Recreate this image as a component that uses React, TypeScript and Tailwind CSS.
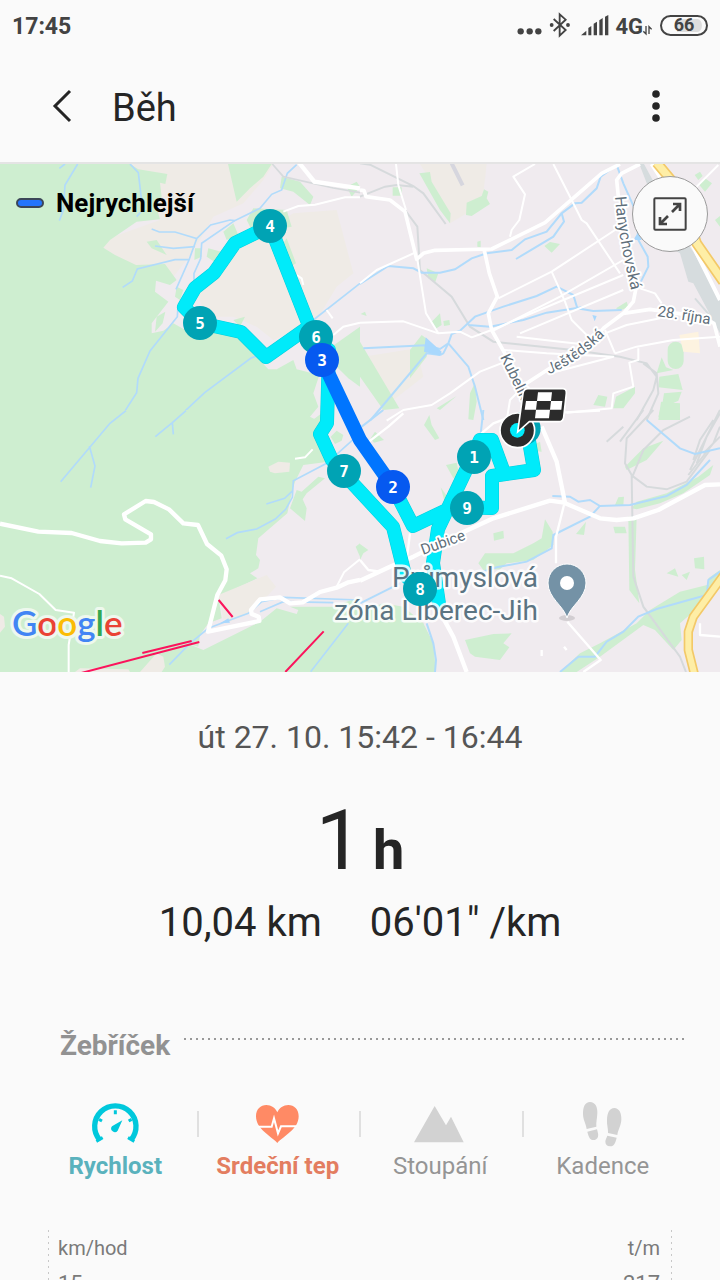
import type { ReactNode } from "react";

type Point = { n: number; x: number; y: number; fast?: boolean };

const points: Point[] = [
  { n: 1, x: 474, y: 457 },
  { n: 9, x: 467, y: 508 },
  { n: 8, x: 420, y: 589 },
  { n: 7, x: 344, y: 471 },
  { n: 6, x: 316, y: 337 },
  { n: 5, x: 200, y: 323 },
  { n: 4, x: 270, y: 226 },
  { n: 3, x: 322, y: 360, fast: true },
  { n: 2, x: 393, y: 487, fast: true },
];

const track =
  "M270 226 L235 243 L214 273 L195 288 L184 307 L200 323 L241 332 L266 357 L310 326 M270 226 L308 323 L322 360 M329 350 L327 423 L320 434 L332 460 L344 474 L393 527 L405 575 L420 590 M439 604 L433 563 L438 529 L467 468 L480 440 H492 L503 470 M393 487 L413 526 L453 507 L492 508 V476 L534 470 L528 435";

function StatusBar() {
  return (
    <div className="flex h-13 items-center justify-between px-3 text-[#434343]">
      <span className="pt-0.5 text-[23px] leading-7 font-bold">17:45</span>
      <div className="flex items-center">
        <svg width="26" height="24" viewBox="0 0 78 72" className="mr-1.5" fill="currentColor" aria-hidden="true">
          <circle cx="11" cy="52" r="9.5" />
          <circle cx="38" cy="52" r="9.5" />
          <circle cx="64" cy="52" r="9.5" />
        </svg>
        <svg width="22" height="26" viewBox="0 0 66 78" className="mr-2.5 mb-0.5" fill="none" stroke="currentColor" strokeWidth="5.5" aria-hidden="true">
          <path d="M14 21 L50 54 L32 71 V7 L50 23 L14 57" />
          <circle cx="8" cy="39" r="3" fill="currentColor" />
          <circle cx="57" cy="39" r="3" fill="currentColor" />
        </svg>
        <svg width="28" height="24" viewBox="0 0 84 72" className="mr-1.5" fill="currentColor" aria-hidden="true">
          <path d="M0 64 L16 50 V64Z" />
          <path d="M22 64 V42 L31 36 V64Z" />
          <path d="M38 64 V29 L48 23 V64Z" />
          <path d="M55 64 V19 L65 12 V64Z" />
          <path d="M72 64 V8 L82 3 V64Z" />
        </svg>
        <span className="pt-0.5 text-[22px] leading-7 font-bold">4G</span>
        <svg width="9" height="24" viewBox="0 0 27 72" className="mt-1 mr-2" fill="none" stroke="currentColor" strokeWidth="4" aria-hidden="true">
          <path d="M9 30 V54 L1 46 M18 54 V32 L26 40" />
        </svg>
        <span className="mb-0.5 flex h-[21px] w-12 items-center justify-center rounded-full border-2 border-current bg-linear-to-r from-[#fafafa] from-35% to-[#dedede] to-35% bg-clip-content px-1 py-0.5 text-[18px] leading-4 font-bold">
          66
        </span>
      </div>
    </div>
  );
}

function Header() {
  return (
    <header className="flex h-28 items-center border-b-2 border-[#e4e4e4] pr-11 pb-0.5 pl-[42px] text-[#252525]">
      <button type="button" aria-label="Zpět" className="flex h-12 w-10 items-center justify-center">
        <svg width="20" height="34" viewBox="0 0 20 34" fill="none" stroke="currentColor" strokeWidth="3">
          <path d="M18 2 L3 17 L18 32" />
        </svg>
      </button>
      <h1 className="ml-[30px] grow pt-1 text-[38px] leading-12">Běh</h1>
      <button type="button" aria-label="Další možnosti" className="flex h-12 w-10 items-center justify-center">
        <svg width="8" height="34" viewBox="0 0 8 34" fill="currentColor">
          <circle cx="4" cy="5" r="3.8" />
          <circle cx="4" cy="17" r="3.8" />
          <circle cx="4" cy="29" r="3.8" />
        </svg>
      </button>
    </header>
  );
}

// each group below is one map tile, drawn in its own 3x units
function BaseMap() {
  return (
    <>
      <rect x="0" y="160" width="720" height="520" fill="#f0ebef" />

      <g transform="translate(0 160) scale(0.33333)">
        <g fill="#efebe6">
          <path d="M390 12 L820 12 L790 60 L730 130 L640 170 L600 240 L560 300 L520 350 L400 320 L300 265 L340 230 L480 180Z" />
          <path d="M640 340 L720 250 L830 190 L880 160 L1010 150 L1060 340 L1010 380 L950 480 L820 540 L770 500 L700 470 L620 470 L590 400Z" />
        </g>
        <g fill="#ceeed0">
          <path d="M0 0 L390 12 L415 28 L502 42 L496 72 L480 68 L485 110 L468 138 L480 178 L410 185 L330 240 L310 263 L345 285 L408 315 L495 312 L530 360 L510 375 L468 362 L465 395 L505 425 L455 490 L455 520 L490 512 L520 490 L560 512 L640 515 L710 530 L760 580 L805 628 L830 628 L880 600 L890 628 L958 645 L940 700 L955 740 L930 770 L960 785 L0 785Z" />
          <path d="M684 12 H815 L790 50 L750 85 L710 125Z" />
          <path d="M845 50 L900 65 L940 110 L930 135 L880 95 L840 85Z" />
          <path d="M1040 80 L1070 65 L1080 80 L1055 110Z" />
          <path d="M440 245 L470 240 L500 285 L455 265Z M625 265 L680 280 L650 310 L620 290Z M670 215 L700 190 L715 225 L680 240Z M585 265 H605 V290 L583 300Z M740 180 L760 145 L860 150 L875 200 L760 220Z M850 250 L860 235 L888 310 L870 320Z" />
          <path d="M470 470 L496 455 L488 490 L465 515Z M530 380 L550 390 L540 420 L525 410Z M700 480 L735 470 L720 500Z" />
          <path d="M995 560 L1080 500 V680 L1045 655 L1010 620Z" />
        </g>
        <g fill="none" stroke="#b1dbfb" strokeWidth="5">
          <path d="M178 25 L195 12 M233 12 L195 75 L190 150 L178 182 M390 12 L415 38 L428 150 L410 170" />
          <path d="M455 207 L478 216 H525 L590 236 L632 195 L690 180 L704 182 L780 145 L815 103 L845 90 L862 40 L890 14" />
          <path d="M704 182 L605 250 L602 296 L582 340 V380 M590 236 L567 300 L528 388 M465 258 L520 265 L585 260 M368 382 L397 363 L412 327 L525 299 H567" />
          <path d="M534 440 L532 470 L450 573 L414 655 L410 698 L374 754 L340 782 M790 580 L752 595 L614 698 L524 782 M940 480 L1080 370" />
        </g>
        <path d="M817 12 L850 50 L1000 84 L1080 98" fill="none" stroke="#d6dadc" strokeWidth="5" />
        <g fill="none" stroke="#fff">
          <path d="M897 8 L943 65 L1080 85" strokeWidth="13" />
          <path d="M850 155 L895 138 L945 134 L1035 112 H1080 M1000 525 L1030 500 L1080 488 M980 450 L998 475 M890 345 L905 355 L910 375" strokeWidth="6" />
        </g>
      </g>

      <g transform="translate(360 160) scale(0.33333)">
        <path d="M180 12 H380 L370 100 L320 160 L270 190 L230 90Z" fill="#efebe6" />
        <path d="M10 590 L170 565 L190 650 L100 720 L50 640Z" fill="#efebe6" />
        <g fill="#ceeed0">
          <path d="M178 40 L210 36 L215 65 L272 160 L270 190 L240 150Z M98 82 H125 V107 H98Z M318 165 L320 128 L365 108 L372 88 L385 95 L380 115 L390 132 L335 168Z M352 245 L362 242 V262 L352 260Z M553 258 L570 246 L600 252 L575 278Z M200 325 L235 340 L225 368 L205 355Z M215 485 L240 460 L245 495 L225 508Z M250 483 L268 480 L270 495 L252 498Z" />
          <path d="M1004 45 L1020 35 L1028 48 L1015 60Z M1018 75 L1035 55 L1056 70 L1035 95Z M1065 180 L1080 168 V200Z M768 445 L800 425 L805 440 L780 452Z M0 545 L118 745 L70 750 L0 650Z M2 462 L15 455 L20 468Z M150 570 L185 525 L205 540 L200 590 L150 655Z M230 745 L290 708 L240 750Z M330 700 L345 668 L350 725 L340 780 L325 778Z" />
          <rect x="923" y="545" width="48" height="82" rx="24" />
          <path d="M890 640 L905 592 L918 622 L940 630Z M898 650 L955 642 L968 690 L895 682Z M912 700 L965 695 L955 722 L905 745Z M903 725 L960 730 V780 H895Z M760 745 L768 710 L825 680 L825 700 L790 745Z M700 735 L715 705 L742 710 L735 740Z" />
        </g>
        <path d="M958 525 L1015 515 L1020 580 L970 575Z" fill="#fdf3e0" />
        <g fill="none" stroke="#d6dadc" strokeWidth="6">
          <path d="M0 10 L30 14 L160 78 L190 100 L257 192 M0 110 L75 80 L110 75 L160 80 M135 150 L172 200 L180 330 L275 410 L330 500 L400 545 L640 570 L780 590 L860 610 L890 650 L880 690 L830 780 M850 610 L890 640 L895 700 L860 780" />
        </g>
        <path d="M838 12 L935 265 L960 280 L985 365 L1000 370 L1080 520 V420 L1000 275 L975 240 L852 12Z" fill="#d6dcde" />
        <path d="M1005 415 L1070 490" stroke="#d6dcde" strokeWidth="6" />
        <path d="M275 10 L308 76" stroke="#d6d6de" strokeWidth="12" />
        <g fill="none" stroke="#b1dbfb" strokeWidth="6">
          <path d="M0 372 L85 318 L160 325 L185 338 H240 L285 328 L335 295 L380 280 L455 270 L495 238 L560 215 L605 160 L645 130 L665 128 L710 85 L722 50 L770 15 L790 70 L830 160 L835 240 L863 290 L865 320 L840 370" />
          <path d="M605 160 L612 185 L580 230 L468 297 M10 565 L195 556 L240 567 L265 550 L275 522 L300 512 L345 470 L430 440 L530 408 L590 380 L640 405 L652 445 L700 453 L785 450 M325 495 L390 500 L490 480 L560 458 L665 442 M265 550 L325 620 L345 680 L370 780 M240 585 L200 580 L70 735 L30 782 M240 585 L250 580 L265 550" />
        </g>
        <path d="M197 532 L245 575 L240 587 L192 575Z M820 240 L835 215 L845 240Z M697 465 L710 468 L704 484Z" fill="#a9d8fd" />
        <g fill="none" stroke="#fff" strokeLinejoin="round">
          <path d="M0 90 L12 92 L18 110 L90 120 L135 155 L170 298 L190 280 L225 271 L395 267 L555 188 L725 40 L780 12" strokeWidth="11" />
          <path d="M372 267 L388 340 L412 410 L385 460 L395 510 L440 590 L490 700 M840 12 L785 40 L770 60 L775 110 M830 375 L820 425 L790 460 L870 448 L1020 470 L1062 490 L1080 560 M790 460 L730 505 L700 540 L500 670" strokeWidth="11" />
          <path d="M108 12 L115 75 L138 150 M0 370 L50 330 L165 278 M172 298 L198 460 L235 520 L130 484 L0 488 M235 520 L300 515 L335 532 L395 510 L790 345 M415 415 L575 335 L765 210 M480 520 L790 390" strokeWidth="6" />
          <path d="M400 512 L600 410 L790 300 M575 335 L615 425 L635 480 L700 545 M580 12 L635 120 L665 180 L680 190 L780 340 M525 12 L460 50 L495 103 L478 180 L455 210 L450 230 M840 385 L885 400 L905 430 M735 520 L800 495 L900 475" strokeWidth="6" />
          <path d="M430 570 L560 580 L760 590 L570 640 M765 580 L735 510 M765 580 L830 560 L940 540 L1080 530 M835 565 V600 L808 608 L820 680 L760 700 L755 745 L620 758 M470 530 L600 545 L690 555 M80 782 L130 750 L215 735 L270 700 L360 635 L450 600 M440 782 L450 720 L500 670 M1010 80 L1075 15" strokeWidth="6" />
          <path d="M875 12 L925 90 L1000 260 L1080 420" strokeWidth="12" />
        </g>
        <path d="M890 8 L950 80 L1010 250 L1090 365" fill="none" stroke="#f3c968" strokeWidth="32" />
        <path d="M890 8 L950 80 L1010 250 L1090 365" fill="none" stroke="#feeea6" strokeWidth="22" />
      </g>

      <g transform="translate(0 410) scale(0.33333)">
        <path d="M0 0 L940 0 L925 15 L935 32 L965 10 V45 L940 75 L965 130 L985 155 L910 165 L885 215 L875 250 L862 310 L775 385 L768 435 L780 450 L775 475 L750 490 L772 505 L655 560 L665 625 L625 640 L600 675 L595 710 L560 700 L610 720 L780 635 L830 595 L890 612 L895 600 L870 590 L1000 590 L1080 560 V790 H0Z" fill="#ceeed0" />
        <path d="M655 555 L800 495 L828 530 L800 560 L770 570 L745 610 L690 635 L670 625Z M805 170 L835 155 L870 158 L868 185 L825 190 L810 185Z M420 786 L470 730 L490 740 L495 770 L485 786Z M0 612 L12 620 L15 650 L0 668Z M225 786 L240 775 L385 778 L390 786Z" fill="#efebe6" />
        <path d="M870 295 L890 240 L905 245 L955 200 L975 205 L920 250 L908 268 L920 295 L915 333Z M992 80 L1010 62 L1030 75 L1025 92 L1005 102Z M1067 410 L1080 400 V440Z" fill="#ceeed0" />
        <g fill="none" stroke="#b1dbfb" strokeWidth="5">
          <path d="M378 2 L330 40 L182 215 M268 108 L285 168 L272 233 M558 2 L517 38 L466 80 M517 38 L520 73" />
          <path d="M1080 70 L980 160 L880 212 L877 262 L857 298 L826 327 L770 357 L712 368 L678 386 M877 243 L854 265 L799 282" />
          <path d="M508 764 L570 700 L625 655 L690 630 L745 610 L785 575 L850 562 L1080 570 M780 605 L850 575 L1000 578 M1045 640 L932 785" />
        </g>
        <path d="M660 640 L685 625 L690 638Z" fill="#a9d8fd" />
        <g fill="none" stroke="#fff" strokeLinejoin="round">
          <path d="M0 341 L115 365 L215 369 L300 393 L365 400 L437 398 L453 388 V373 L376 328 L372 313 L437 273 L462 276 L507 298 L550 340 L594 345 L621 402 L664 437 L680 478 L676 511 L652 555 L624 665 L778 633 L776 620 L755 612 L753 600 L780 568 L840 562 L870 580 L908 577 L960 546 L1010 533 L1045 517 L1080 510" strokeWidth="13" />
          <path d="M0 497 L35 505 L118 552 L167 600 L222 608 L206 705 V786 M1010 530 L1032 487 L1080 448 M885 146 L915 142 L938 118" strokeWidth="6" />
        </g>
        <path d="M656 570 L698 621 M427 729 L575 693 M240 790 L598 696 M856 786 L971 664" stroke="#fb145c" strokeWidth="6" fill="none" />
      </g>

      <g transform="translate(360 410) scale(0.33333)">
        <g fill="#ceeed0">
          <path d="M0 605 L70 580 L130 590 L190 640 L220 700 L228 790 H0Z" />
          <path d="M315 690 L400 672 L455 670 L430 700 L448 712 L420 750 L345 740 L330 730Z M355 460 L375 430 L460 430 L520 400 L545 385 L555 328 L578 365 L580 405 L520 450 L440 460 L420 478 L370 480Z M400 370 L430 362 L432 385 L402 392Z M648 372 L678 335 L672 375Z" />
          <path d="M600 786 L660 730 L720 700 L830 640 L870 600 L960 545 L1080 515 L1070 545 L960 640 L965 690 L940 720 L885 660 L850 645 L720 740 L650 786Z" />
          <path d="M805 320 H830 L825 480 L838 580 L808 540Z M760 350 L795 350 L800 370 L765 370Z M920 490 L945 475 L955 500Z M965 495 L990 485 L980 510Z M1002 445 L1032 440 L1033 478 L1005 475Z" />
          <path d="M765 285 L775 262 L792 260 L790 285Z M815 295 L830 275 L920 250 L1015 200 L1060 165 L1050 195 L970 250 L900 280 L830 298Z M795 170 L850 115 L910 92 L860 150 L800 180Z M900 0 H955 L960 30 L895 20Z M192 45 L208 15 L215 45 L238 85 L225 90Z M258 165 L290 158 L298 195 L280 205Z M32 85 L45 65 L72 90 L42 98Z M242 232 L262 260 L255 280Z M0 402 L25 420 L10 430 L0 450Z M1045 505 L1080 480 V520 L1050 550Z M490 120 L540 95 L545 125Z" />
        </g>
        <g fill="none" stroke="#d6dadc" strokeWidth="6">
          <path d="M880 0 L800 85 L795 160 L815 195 L820 500 L850 590 L960 740 L978 786 M820 200 L860 230 L920 238 L980 215 L1050 120 M815 205 L850 120 L910 60 L990 20" />
          <path d="M780 95 L850 0 M990 180 L1080 0 M985 195 L1060 100 L1080 50 M1000 150 L1020 90 L1060 30 M1010 160 L1040 80 L1080 10 M1030 130 L1080 80 M740 95 L790 50" />
        </g>
        <g fill="none" stroke="#b1dbfb" strokeWidth="6">
          <path d="M860 30 L960 115 L1005 132 L1080 115 M577 258 L630 260 L655 275 L690 270 L720 288 L810 285 L920 258 L980 225 L1050 150 M718 290 L690 320 L580 375 L575 415 L500 455 L410 472 L320 500" />
          <path d="M370 0 L360 90 M5 50 L70 0 M200 640 L220 700 L228 750 L225 786 M600 786 L655 740 H705 L740 695 L790 665 L835 620 L890 597 L1040 555 L1045 510 L1080 485 M0 580 L120 520" />
        </g>
        <g fill="none" stroke="#fff" strokeLinejoin="round">
          <path d="M0 512 L90 470 L160 440 L270 385 L400 325 L570 272 L612 278 L720 325 L770 330 L820 325 L895 300 L1035 225 L1080 223 M545 50 L590 155 L615 278 M215 560 L280 680 L320 786" strokeWidth="13" />
          <path d="M612 285 L588 380 V460 M622 635 L722 750 L670 786 M20 100 L85 50 L130 10 M0 450 L25 480 L60 485 M150 370 L140 450 M335 95 L400 40 L440 25 M600 8 L720 2 M1020 640 V675 L1080 680 M545 720 V738 M612 710 L620 720" strokeWidth="7" />
          <path d="M1095 490 L1000 620 L985 665 V720 L1005 800" stroke="#f3c968" strokeWidth="28" />
          <path d="M1095 490 L1000 620 L985 665 V720 L1005 800" stroke="#feeea6" strokeWidth="18" />
        </g>
      </g>
    </>
  );
}

function StreetNames() {
  return (
    <g fill="#5f6f7b" stroke="#fff" strokeWidth="4" strokeLinejoin="round" paintOrder="stroke" fontSize="16">
      <path id="hanychovska" d="M615 197 Q618 240 636 310" fill="none" stroke="none" />
      <path id="jestedska" d="M549 374 Q578 364 616 324" fill="none" stroke="none" />
      <text>
        <textPath href="#hanychovska">Hanychovská</textPath>
      </text>
      <text fontSize="15">
        <textPath href="#jestedska">Ještědská</textPath>
      </text>
      <text transform="translate(657 316) rotate(9)" fontSize="15">
        28. října
      </text>
      <text transform="translate(500 357) rotate(64)" fontSize="15">
        Kubelík
      </text>
      <text transform="translate(423 555) rotate(-20)" fontSize="15">
        Dubice
      </text>
    </g>
  );
}

function Route() {
  return (
    <g fill="none" strokeLinejoin="round" strokeLinecap="round">
      <path d={track} stroke="#00cfdd" strokeWidth="14" />
      <path d={track} stroke="#00ebfa" strokeWidth="13" />
      <path d="M322 360 L360 440 L393 487" stroke="#0075ff" strokeWidth="14" />
    </g>
  );
}

function Markers() {
  return (
    <>
      {points.map((p) => (
        <g key={p.n}>
          <circle cx={p.x} cy={p.y} r="17" fill={p.fast ? "#0659f0" : "#00a3b4"} />
          <text x={p.x} y={p.y + 6} textAnchor="middle" fill="#fff" fontSize="16" className="font-['DejaVu_Sans_Mono'] font-bold">
            {p.n}
          </text>
        </g>
      ))}
      <g transform="translate(450 380) scale(0.33333)">
        <circle cx="222" cy="145" r="50" fill="#00a3b4" />
        <circle cx="202" cy="151" r="52" fill="#2b2b2b" stroke="#fff" strokeWidth="5" />
        <circle cx="202" cy="151" r="22" fill="#00ebfa" />
        <path
          d="M234 26 H338 Q350 26 349 40 L341 112 Q339 125 326 125 H238 L203 156 L219 40 Q221 26 234 26Z"
          fill="#2b2b2b"
          stroke="#fff"
          strokeWidth="5"
        />
        <path d="M264 37 H306 L303 63 H261Z M228 63 H261 L258 89 H224Z M303 63 H337 L334 89 H300Z M258 89 H300 L297 115 H255Z" fill="#fff" />
      </g>
    </>
  );
}

function GoogleMark() {
  return (
    <text x="12" y="636" fontSize="35" stroke="#eef8ee" strokeWidth="6" strokeLinejoin="round" paintOrder="stroke" className="font-[Lato] font-semibold">
      <tspan fill="#4285f4">G</tspan>
      <tspan fill="#ea4335">o</tspan>
      <tspan fill="#fbbc05">o</tspan>
      <tspan fill="#4285f4">g</tspan>
      <tspan fill="#34a853">l</tspan>
      <tspan fill="#ea4335">e</tspan>
    </text>
  );
}

function RouteMap() {
  return (
    <section className="relative">
      <svg viewBox="0 164 720 508" className="block h-auto w-full" role="img" aria-label="Mapa trasy">
        <BaseMap />
        <Route />
        <StreetNames />
        <g fill="#5b7482" stroke="#fff" strokeOpacity="0.85" strokeWidth="5" strokeLinejoin="round" paintOrder="stroke" fontSize="28" textAnchor="end">
          <text x="538" y="587">Průmyslová</text>
          <text x="538" y="620">zóna Liberec-Jih</text>
        </g>
        <ellipse cx="567" cy="618" rx="8" ry="3" fill="#000" opacity="0.12" />
        <path d="M567 618 C564 606 548 598 548 583 A19 19 0 0 1 586 583 C586 598 570 606 567 618Z" fill="#7492a6" stroke="#fff" strokeWidth="1" />
        <circle cx="567" cy="583" r="7" fill="#fff" />
        <Markers />
        <GoogleMark />
      </svg>
      <div className="absolute top-[19px] left-4 flex items-center gap-3">
        <span className="h-2.5 w-7 rounded-full border-2 border-[#3c4658] bg-[#2474fb]" />
        <span className="text-[26px] leading-10 font-bold text-black">Nejrychlejší</span>
      </div>
      <button
        type="button"
        aria-label="Zvětšit mapu"
        className="absolute top-3 right-3 flex size-19 items-center justify-center rounded-full border border-[#9b9b9b] bg-[#fafafa] text-[#434343]"
      >
        <svg width="34" height="34" viewBox="0 0 102 102" fill="none" stroke="currentColor" strokeWidth="6">
          <rect x="4" y="4" width="94" height="94" rx="3" />
          <path d="M57 45 L81 21 M60 21 H81 V42 M45 57 L21 81 M21 60 V81 H42" strokeWidth="8" />
        </svg>
      </button>
    </section>
  );
}

function Summary() {
  return (
    <section className="pt-[45px] text-center text-[#252525]">
      <p className="text-[32px] leading-10 text-[#555]">út 27. 10. 15:42 - 16:44</p>
      <p className="mt-11 text-[84px] leading-20">
        1<span className="ml-2.5 text-[56px] leading-none font-bold">h</span>
      </p>
      <div className="mt-[18px] flex justify-center gap-12 text-[40px] leading-12">
        <span>10,04 km</span>
        <span>06'01" /km</span>
      </div>
    </section>
  );
}

function SpeedIcon() {
  return (
    <svg width="52" height="48" viewBox="150 240 156 144" fill="none" stroke="#00c8dc" aria-hidden="true">
      <path d="M182 357 A62 62 0 1 1 276 357" strokeWidth="16" />
      <path d="M229 268 V280 M180 295 L189 300 M278 295 L269 300 M172 361 L191 350 M286 361 L267 350" strokeWidth="9" />
      <path d="M250 298 L236 329 A10 10 0 1 1 219 316Z" fill="#00c8dc" stroke="none" />
    </svg>
  );
}

function HeartIcon() {
  return (
    <svg width="52" height="48" viewBox="638 240 156 144" fill="none" aria-hidden="true">
      <path
        d="M714 366 C695 345 650 325 650 286 C650 264 664 252 681 252 C696 252 708 261 714 274 C720 261 732 252 747 252 C764 252 778 264 778 286 C778 325 733 345 714 366Z"
        fill="#ff8a65"
      />
      <path d="M655 317 H697 L704 292 L716 337 L725 316 H772" stroke="#fff" strokeWidth="6" />
    </svg>
  );
}

function MountainIcon() {
  return (
    <svg width="52" height="48" viewBox="136 240 156 144" fill="#d2d2d2" aria-hidden="true">
      <path d="M136 364 L198 255 L232 313 L247 287 L285 364Z" />
    </svg>
  );
}

function StepsIcon() {
  return (
    <svg width="52" height="48" viewBox="623 240 156 144" fill="#d2d2d2" aria-hidden="true">
      <path d="M662 243 C678 243 685 258 684 277 C683 294 680 305 681 317 L652 324 C650 308 641 297 641 278 C641 258 647 243 662 243Z" />
      <path d="M654 332 L683 325 C685 334 688 340 686 347 C684 354 678 357 672 357 C660 357 657 343 654 332Z" />
      <path d="M735 261 C749 261 757 276 756 296 C755 315 746 325 744 342 L716 336 C717 322 712 312 713 296 C714 276 720 261 735 261Z" />
      <path d="M714 344 L742 350 C739 362 736 376 722 376 C713 376 708 370 708 362 C708 355 712 351 714 344Z" />
    </svg>
  );
}

type Metric = { label: string; icon: ReactNode; color: string };

const metrics: Metric[] = [
  { label: "Rychlost", icon: <SpeedIcon />, color: "font-bold text-[#5ab2bd]" },
  { label: "Srdeční tep", icon: <HeartIcon />, color: "font-bold text-[#e37d60]" },
  { label: "Stoupání", icon: <MountainIcon />, color: "text-[#959595]" },
  { label: "Kadence", icon: <StepsIcon />, color: "text-[#959595]" },
];

function Ranking() {
  return (
    <section className="mt-[79px]">
      <div className="flex pr-9 pl-15">
        <h2 className="text-[28px] leading-10 font-bold text-[#929292]">Žebříček</h2>
        <div className="mt-3 ml-3.5 h-0.5 grow bg-[repeating-linear-gradient(90deg,#999_0_2px,transparent_2px_6px)]" />
      </div>
      <div className="mt-[35px] flex pr-9 pl-[34px]">
        {metrics.map((m, i) => (
          <div key={m.label} className="relative flex-1">
            {i > 0 && <span className="absolute top-2.5 left-0 h-6.5 w-0.5 bg-[#e0e0e0]" />}
            <button type="button" className="flex w-full flex-col items-center gap-px">
              {m.icon}
              <span className={`text-[24px] leading-8 whitespace-nowrap ${m.color}`}>{m.label}</span>
            </button>
          </div>
        ))}
      </div>
    </section>
  );
}

function Chart() {
  return (
    <section className="mx-12 mt-12 flex text-[#7a7a7a]">
      <div className="w-px bg-[repeating-linear-gradient(#c8c8c8_0_2px,transparent_2px_6px)]" />
      <div className="grow pt-1 pr-[11px] pl-[9px]">
        <div className="flex justify-between text-[20px] leading-7">
          <span>km/hod</span>
          <span>t/m</span>
        </div>
        <div className="mt-2 flex justify-between text-[22px] leading-7">
          <span>15</span>
          <span>217</span>
        </div>
      </div>
      <div className="w-px bg-[repeating-linear-gradient(#c8c8c8_0_2px,transparent_2px_6px)]" />
    </section>
  );
}

export default function App() {
  return (
    <main className="min-h-screen bg-[#fafafa] font-[Roboto,sans-serif]">
      <StatusBar />
      <Header />
      <RouteMap />
      <Summary />
      <Ranking />
      <Chart />
    </main>
  );
}
